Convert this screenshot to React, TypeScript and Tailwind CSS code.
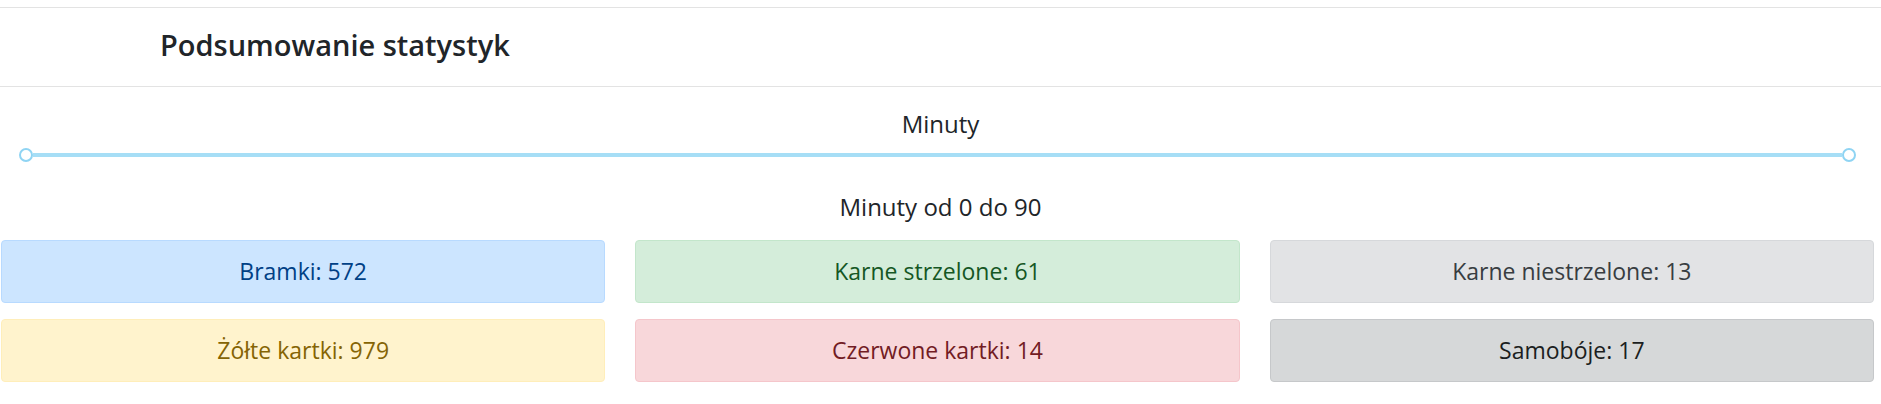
import React from 'react';

type Stat = { label: string; value: number; box: string };

const stats: Stat[] = [
    { label: 'Bramki', value: 572, box: 'bg-[#cce5ff] border-[#b8daff] text-[#004085]' },
    { label: 'Karne strzelone', value: 61, box: 'bg-[#d4edda] border-[#c3e6cb] text-[#155724]' },
    { label: 'Karne niestrzelone', value: 13, box: 'bg-[#e2e3e5] border-[#d6d8db] text-[#383d41]' },
    { label: 'Żółte kartki', value: 979, box: 'bg-[#fff3cd] border-[#ffeeba] text-[#856404]' },
    { label: 'Czerwone kartki', value: 14, box: 'bg-[#f8d7da] border-[#f5c6cb] text-[#721c24]' },
    { label: 'Samobóje', value: 17, box: 'bg-[#d6d8d9] border-[#c6c8ca] text-[#1b1e21]' },
];

const Handle: React.FC = () => (
    <span className="w-[14px] h-[14px] rounded-full bg-white border-2 border-[#8fd4f3] shrink-0" />
);

export default function App() {
    return (
        <div className="w-[1881px] h-[404px] bg-white text-[#212529] font-['Open_Sans',sans-serif] pt-[7px]">
            {/* Header */}
            <div className="h-[80px] border-y border-[#e3e3e3] flex items-center pl-[160px] pb-[6px]">
                <h5 className="text-[29px] font-semibold leading-none">Podsumowanie statystyk</h5>
            </div>

            {/* Range filter */}
            <div className="text-center text-[24px] leading-[29px] mt-[22px]">Minuty</div>
            <div className="flex items-center h-[20px] mt-[7px] pl-[19px] pr-[25px]">
                <Handle />
                <div className="flex-1 h-[4px] bg-[#a6def6]" />
                <Handle />
            </div>
            <div className="text-center text-[24px] leading-[29px] mt-[27px]">Minuty od 0 do 90</div>

            {/* Stats */}
            <div className="grid grid-cols-3 gap-x-[30px] gap-y-[16px] mt-[19px] pl-[1px] pr-[7px]">
                {stats.map((s) => (
                    <div
                        key={s.label}
                        className={`h-[63px] border rounded-[4px] flex items-center justify-center text-[23px] ${s.box}`}
                    >
                        {s.label}: {s.value}
                    </div>
                ))}
            </div>
        </div>
    );
}
